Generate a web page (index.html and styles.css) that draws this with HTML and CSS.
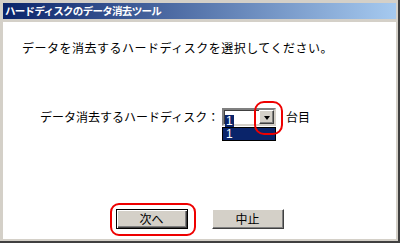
FILE: index.html
```html
<!DOCTYPE html>
<html lang="ja">
<head>
<meta charset="utf-8">
<link rel="stylesheet" href="styles.css">
</head>
<body>
<div class="window">
  <div class="titlebar">ハードディスクのデータ消去ツール</div>
  <div class="content">
    <p class="intro">データを消去するハードディスクを選択してください。</p>
    <div class="row">
      <span class="label">データ消去するハードディスク：</span>
      <div class="combo">
        <div class="edit"><span class="sel">1</span></div>
        <div class="drop"><span class="arrow"></span></div>
        <div class="list"><span class="item">1</span></div>
        <div class="mark mark-drop"></div>
      </div>
      <span class="unit">台目</span>
    </div>
    <div class="spacer"></div>
    <div class="buttons">
      <div class="btn-wrap">
        <button class="btn default">次へ</button>
        <div class="mark mark-next"></div>
      </div>
      <button class="btn">中止</button>
    </div>
  </div>
</div>
</body>
</html>
```
FILE: styles.css
```css
* { box-sizing: border-box; }
html, body { margin: 0; padding: 0; background: #fff; }
body {
  font-family: "Noto Sans CJK JP", "Noto Sans", sans-serif;
  font-size: 12px;
  color: #000;
}
.window {
  width: 400px;
  height: 243px;
  background: #d4d0c8;
  padding: 3px 4px 4px 3px;
  display: flex;
  flex-direction: column;
  box-shadow: inset -1px -1px 0 #404040, inset -2px -2px 0 #404040, inset -3px -3px 0 #d4d0c8;
}
.titlebar {
  height: 16px;
  background: linear-gradient(to right, #0a246a, #a6caf0);
  color: #fff;
  font-weight: bold;
  font-size: 10.5px;
  line-height: 16px;
  padding-left: 2px;
  white-space: nowrap;
  letter-spacing: -0.7px;
}
.content {
  margin-top: 3px;
  flex: 1;
  background: #fff;
  display: flex;
  flex-direction: column;
  padding: 20px 0 0 19px;
}
.intro {
  margin: 0;
  line-height: 12px;
  height: 12px;
  letter-spacing: 0.5px;
}
.row {
  margin-top: 54px;
  margin-left: 18px;
  height: 18px;
  display: flex;
  align-items: center;
}
.label { width: 182px; line-height: 12px; white-space: nowrap; }
.combo {
  position: relative;
  width: 54px;
  height: 18px;
  background: #fff;
  border-style: solid;
  border-width: 2px;
  border-color: #808080 #d4d0c8 #d4d0c8 #808080;
  box-shadow: inset 1px 1px 0 #404040;
  display: flex;
}
.edit {
  flex: 1;
  padding: 1px 0 0 1px;
}
.sel {
  display: inline-block;
  background: #0a246a;
  color: #fff;
  font-family: "Liberation Sans", sans-serif;
  font-size: 12px;
  line-height: 13px;
  height: 13px;
  padding: 0 1px;
}
.drop {
  width: 15px;
  height: 14px;
  background: #d4d0c8;
  border-style: solid;
  border-width: 1px;
  border-color: #fff #404040 #404040 #fff;
  box-shadow: inset -1px -1px 0 #808080;
  display: flex;
  align-items: center;
  justify-content: center;
}
.arrow {
  width: 0;
  height: 0;
  border-left: 3.5px solid transparent;
  border-right: 3.5px solid transparent;
  border-top: 4px solid #000;
  margin-top: 1px;
}
.list {
  position: absolute;
  left: -2px;
  top: 17px;
  width: 54px;
  height: 14px;
  background: #0a246a;
  border: 1px solid #000;
  color: #fff;
  font-family: "Liberation Sans", sans-serif;
  font-size: 12px;
  line-height: 12px;
  padding-left: 3px;
}
.unit { margin-left: 10px; line-height: 12px; }
.spacer { flex: 1; }
.buttons {
  display: flex;
  justify-content: center;
  gap: 24px;
  padding: 0 19px 10px 0;
}
.btn-wrap { position: relative; }
.btn {
  width: 72px;
  height: 20px;
  margin: 0;
  padding: 0;
  background: #d4d0c8;
  font-family: "Noto Sans CJK JP", sans-serif;
  font-size: 12px;
  line-height: 12px;
  color: #000;
  border-style: solid;
  border-width: 1px;
  border-color: #fff #404040 #404040 #fff;
  box-shadow: inset -1px -1px 0 #808080;
  display: block;
}
.btn.default {
  border: 1px solid #000;
  box-shadow: inset 1px 1px 0 #fff, inset -1px -1px 0 #404040, inset -2px -2px 0 #808080;
}
.mark {
  position: absolute;
  border: 2.5px solid #ee0000;
  pointer-events: none;
}
.mark-drop {
  left: 30px;
  top: -9px;
  width: 29px;
  height: 34px;
  border-radius: 10px;
}
.mark-next {
  left: -6px;
  top: -6px;
  width: 86px;
  height: 33px;
  border-radius: 9px;
}
```
